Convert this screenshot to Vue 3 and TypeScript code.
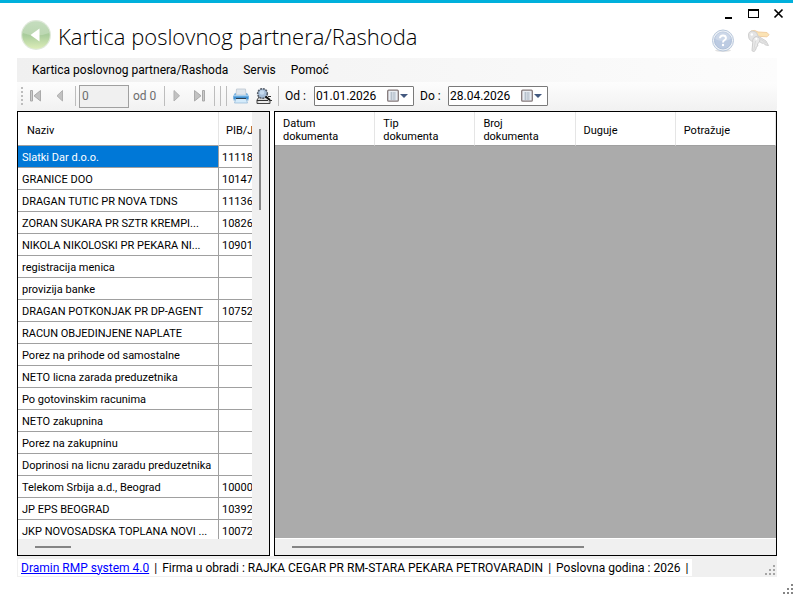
<script setup lang="ts">
import { ref } from 'vue'

interface Partner {
  naziv: string
  pib: string
}

const partners: Partner[] = [
  { naziv: 'Slatki Dar d.o.o.', pib: '11118' },
  { naziv: 'GRANICE DOO', pib: '10147' },
  { naziv: 'DRAGAN TUTIC PR NOVA TDNS', pib: '11136' },
  { naziv: 'ZORAN SUKARA PR SZTR KREMPI...', pib: '10826' },
  { naziv: 'NIKOLA NIKOLOSKI PR PEKARA NI...', pib: '10901' },
  { naziv: 'registracija menica', pib: '' },
  { naziv: 'provizija banke', pib: '' },
  { naziv: 'DRAGAN POTKONJAK PR DP-AGENT', pib: '10752' },
  { naziv: 'RACUN OBJEDINJENE NAPLATE', pib: '' },
  { naziv: 'Porez na prihode od samostalne', pib: '' },
  { naziv: 'NETO licna zarada preduzetnika', pib: '' },
  { naziv: 'Po gotovinskim racunima', pib: '' },
  { naziv: 'NETO zakupnina', pib: '' },
  { naziv: 'Porez na zakupninu', pib: '' },
  { naziv: 'Doprinosi na licnu zaradu preduzetnika', pib: '' },
  { naziv: 'Telekom Srbija a.d., Beograd', pib: '10000' },
  { naziv: 'JP EPS BEOGRAD', pib: '10392' },
  { naziv: 'JKP NOVOSADSKA TOPLANA NOVI ...', pib: '10072' },
]

const columns: string[] = ['Datum dokumenta', 'Tip dokumenta', 'Broj dokumenta', 'Duguje', 'Potražuje']

const selected = ref(0)
const page = ref('0')
const dateFrom = ref('01.01.2026')
const dateTo = ref('28.04.2026')
</script>

<template>
  <div class="window">
    <header class="head">
      <button class="plain back">
        <svg width="32" height="32" viewBox="0 0 32 32">
          <defs>
            <linearGradient id="backFill" x1="0" y1="0" x2="0" y2="1">
              <stop offset="0" stop-color="#b4d3ac" />
              <stop offset="0.5" stop-color="#a9cc9c" />
              <stop offset="1" stop-color="#dcedb8" />
            </linearGradient>
          </defs>
          <circle cx="16" cy="16" r="15" fill="#dfe9da" />
          <circle cx="16" cy="16" r="13.8" fill="url(#backFill)" />
          <path d="M3 14a13 12 0 0 1 26 0q-13 5-26 0z" fill="#fff" opacity=".22" />
          <path d="M19.5 9.5v13L10.500 16z" fill="#fff" />
        </svg>
      </button>
      <h1>Kartica poslovnog partnera/Rashoda</h1>
      <div class="corner">
        <div class="controls">
          <button class="plain"><svg width="13" height="12" viewBox="0 0 13 12"><path d="M3 9h7v2H3z" fill="#000" /></svg></button>
          <button class="plain"><svg width="13" height="12" viewBox="0 0 13 12"><path d="M1 1h11v9H1zM2 3v6h9V3z" fill="#000" fill-rule="evenodd" /></svg></button>
          <button class="plain"><svg width="13" height="12" viewBox="0 0 13 12"><path d="M2.500 1.500l8 8M10.500 1.500l-8 8" stroke="#000" stroke-width="1.700" /></svg></button>
        </div>
        <div class="tools">
          <button class="plain">
            <svg width="24" height="24" viewBox="0 0 24 24">
              <ellipse cx="12" cy="21.500" rx="8" ry="1.500" fill="#e2e2e2" />
              <circle cx="12" cy="11.500" r="10.500" fill="#eef2f7" stroke="#b9c8dc" />
              <circle cx="12" cy="11.500" r="8.500" fill="#bccbe2" stroke="#afc0d9" />
              <path d="M4 10a8 7.500 0 0 1 16 0q-8 4-16 0z" fill="#fff" opacity=".25" />
              <path d="M9 9.300q.2-2.800 3-2.800t3 2.600q0 1.500-1.800 2.300-1.200.6-1.200 2" fill="none" stroke="#fff" stroke-width="1.900" />
              <circle cx="12" cy="16" r="1.200" fill="#fff" />
            </svg>
          </button>
          <button class="plain">
            <svg width="24" height="24" viewBox="0 0 24 24">
              <path d="M4 2q4-1.500 7 1l9 .5 2 2.300-2 2-8.500-.5-6-.7z" fill="#fbe3b4" stroke="#f1cfa2" />
              <path d="M1.500 6q0-4 4.500-4 4.500.5 5 5l8 5 2.500 4.500-3.300-.6-1.500-1.800-1.600.2-5.600-3.700q-2 2.300-5 1.500Q1 10.500 1.500 6z" fill="#e4e4e4" stroke="#d0d0d0" />
              <path d="M6.500 9q2.500-3 5.500-.5 1.800 2 .3 4.500l-1.800 2 .3 2-1.600 1-.2 2-1.700 2.500-2.300-.7.700-8q-.5-2.500.8-4.800z" fill="#e9e9e9" stroke="#cdcdcd" />
              <path d="M8.500 12l-1.700 9M12 9l7 5" stroke="#d8d8d8" />
              <circle cx="4.800" cy="5.500" r="1.200" fill="#fff" />
              <circle cx="9.300" cy="9.800" r="1.100" fill="#fff" />
            </svg>
          </button>
        </div>
      </div>
    </header>

    <main class="content">
      <nav class="menu">
        <a href="#">Kartica poslovnog partnera/Rashoda</a>
        <a href="#">Servis</a>
        <a href="#">Pomoć</a>
      </nav>

      <div class="toolbar">
        <svg class="grip" width="4" height="20" viewBox="0 0 4 20"><path d="M1 1h2v2H1zM1 5h2v2H1zM1 9h2v2H1zM1 13h2v2H1zM1 17h2v2H1z" fill="#bdbdbd" /></svg>
        <button class="plain tool">
          <svg width="14" height="14" viewBox="0 0 14 14"><path d="M1.500 1.500h2v10.500h-2z" fill="#ccc" stroke="#a8a8a8" /><path d="M11.500 1.500v10.500L5 6.800z" fill="#c2c2c2" stroke="#aaa" /></svg>
        </button>
        <button class="plain tool">
          <svg width="14" height="14" viewBox="0 0 14 14"><path d="M9.500 1.500v10.500L4 6.800z" fill="#c2c2c2" stroke="#b0b0b0" /></svg>
        </button>
        <span class="sep"></span>
        <input v-model="page" class="page" type="text" aria-labelledby="pageCount" disabled />
        <label id="pageCount" class="count">od 0</label>
        <span class="sep"></span>
        <button class="plain tool narrow">
          <svg width="14" height="14" viewBox="0 0 14 14"><path d="M4 1.500v10.500l5.500-5.200z" fill="#c2c2c2" stroke="#b0b0b0" /></svg>
        </button>
        <button class="plain tool">
          <svg width="14" height="14" viewBox="0 0 14 14"><path d="M10.500 1.500h2v10.500h-2z" fill="#ccc" stroke="#a8a8a8" /><path d="M2.500 1.500v10.500L9 6.800z" fill="#c2c2c2" stroke="#aaa" /></svg>
        </button>
        <span class="sep"></span>
        <span class="sep"></span>
        <span class="sep"></span>
        <button class="plain tool">
          <svg width="16" height="16" viewBox="0 0 16 16">
            <path d="M3.500 1h9l.5 6H3z" fill="#dfe6ed" stroke="#bcc6d0" stroke-width=".8" />
            <path d="M1.500 5.500L3 5v2.500h10V5l1.500.5 1 2v5H.5v-5z" fill="#7db4e0" />
            <path d="M.5 8h15v3H.5z" fill="#3f90d2" />
            <path d="M1 7.200h14v1.200H1z" fill="#a8d2f2" />
            <path d="M3 10.500h10l1.500 4.500h-13z" fill="#d4ebfb" stroke="#8fb5d4" stroke-width=".7" />
            <path d="M3 10h10v1H3z" fill="#30404f" />
          </svg>
        </button>
        <button class="plain tool preview">
          <svg width="18" height="18" viewBox="0 0 18 18">
            <path d="M4 10h8l3 3v3.500H2V13z" fill="#d8d8d8" stroke="#444" />
            <path d="M2 13.500h11" stroke="#333" />
            <circle cx="7.500" cy="6.500" r="4.800" fill="#a5bdd8" stroke="#555d68" stroke-width="1.600" stroke-dasharray="2 .8" />
            <circle cx="7" cy="5.500" r="2.300" fill="#c5daef" />
            <path d="M10.500 9.500l4.500 3.500" stroke="#111" stroke-width="2" />
            <path d="M4 15h9" stroke="#fff" />
            <path d="M13 9.500h3M14.500 13.500H17" stroke="#333" />
          </svg>
        </button>
        <span class="sep"></span>
        <label class="datelabel" for="dateFrom">Od :</label>
        <div class="date">
          <input id="dateFrom" v-model="dateFrom" type="text" />
          <button class="plain">
            <svg width="22" height="14" viewBox="0 0 22 14"><rect x=".7" y="1.200" width="10.600" height="11" rx="1" fill="#e9edf3" stroke="#84797a" stroke-width="1.300" /><path d="M3 4h6M3 6h6M3 8h6M3 10h6M4.500 3v8M7 3v8" stroke="#a9b4c2" stroke-width=".7" /><path d="M13 5h8l-4 4z" fill="#43597f" /></svg>
          </button>
        </div>
        <label class="datelabel second" for="dateTo">Do :</label>
        <div class="date">
          <input id="dateTo" v-model="dateTo" type="text" />
          <button class="plain">
            <svg width="22" height="14" viewBox="0 0 22 14"><rect x=".7" y="1.200" width="10.600" height="11" rx="1" fill="#e9edf3" stroke="#84797a" stroke-width="1.300" /><path d="M3 4h6M3 6h6M3 8h6M3 10h6M4.500 3v8M7 3v8" stroke="#a9b4c2" stroke-width=".7" /><path d="M13 5h8l-4 4z" fill="#43597f" /></svg>
          </button>
        </div>
      </div>

      <div class="split">
        <section class="panel list">
          <div class="clip">
            <table class="partners">
              <thead>
                <tr><th class="name">Naziv</th><th class="pib">PIB/J</th></tr>
              </thead>
              <tbody>
                <tr v-for="(p, i) in partners" :key="p.naziv" @click="selected = i">
                  <td :class="{ selected: i === selected }">{{ p.naziv }}</td>
                  <td>{{ p.pib }}</td>
                </tr>
              </tbody>
            </table>
          </div>
          <div class="vbar"><span class="vthumb"></span></div>
          <div class="hbar"><span class="hthumb short"></span></div>
        </section>

        <section class="panel card">
          <div class="clip gray">
            <table class="entries">
              <thead>
                <tr><th v-for="c in columns" :key="c">{{ c }}</th></tr>
              </thead>
            </table>
          </div>
          <div class="hbar"><span class="hthumb long"></span></div>
        </section>
      </div>

      <footer class="status">
        <div class="info">
          <a href="#">Dramin RMP system 4.0</a>
          <span class="bar">|</span>
          <span>Firma u obradi : RAJKA CEGAR PR RM-STARA PEKARA PETROVARADIN</span>
          <span class="bar">|</span>
          <span>Poslovna godina : 2026</span>
          <span class="bar">|</span>
        </div>
        <svg class="size" width="11" height="11" viewBox="0 0 11 11"><path d="M8 0h2v2H8zM4 4h2v2H4zM8 4h2v2H8zM0 8h2v2H0zM4 8h2v2H4zM8 8h2v2H8z" fill="#a5a5a5" /></svg>
      </footer>
    </main>
    <svg class="corner-grip" width="10" height="10" viewBox="0 0 10 10"><path d="M8 0h2v2H8zM4 4h2v2H4zM8 4h2v2H8zM0 8h2v2H0zM4 8h2v2H4zM8 8h2v2H8z" fill="#858585" /></svg>
  </div>
</template>

<style>
body {
  margin: 0;
  background: #fff;
}
</style>

<style scoped>
* {
  box-sizing: border-box;
}
.window {
  position: relative;
  display: flex;
  flex-direction: column;
  height: 100vh;
  padding-bottom: 18px;
  border-top: 3px solid #00b0dc;
  background: #fff;
  color: #000;
  font: 12px/16px Roboto, 'Open Sans', sans-serif;
}
svg {
  display: block;
}
.plain {
  display: flex;
  align-items: center;
  justify-content: center;
  padding: 0;
  border: 0;
  background: none;
}
.head {
  display: flex;
  flex: none;
  align-items: flex-start;
  height: 55px;
  padding: 0 8px 0 20px;
}
.back {
  margin-top: 16px;
}
h1 {
  flex: 1;
  margin: 17px 0 0 6px;
  font-family: 'Open Sans', 'Noto Sans', sans-serif;
  font-size: 22px;
  font-weight: 300;
  line-height: 32px;
  white-space: nowrap;
}
.controls {
  display: flex;
  gap: 12px;
  justify-content: flex-end;
  padding-top: 5px;
}
.tools {
  display: flex;
  gap: 12px;
  justify-content: flex-end;
  padding: 9px 14px 0 0;
}
.content {
  display: flex;
  flex: 1;
  flex-direction: column;
  min-height: 0;
  margin: 0 16px 0 17px;
}
.menu {
  display: flex;
  flex: none;
  gap: 15px;
  height: 24px;
  padding-left: 15px;
  background: linear-gradient(90deg, #f0f0f0, #fcfcfc);
  line-height: 24px;
}
.menu a {
  color: #000;
  text-decoration: none;
}
.toolbar {
  display: flex;
  flex: none;
  align-items: center;
  height: 29px;
  padding: 0 0 1px 3px;
  border-radius: 0 0 3px 0;
  background: linear-gradient(#fdfdfd, #f1f1f1);
}
.tool {
  width: 24px;
  height: 24px;
}
.narrow {
  width: 20px;
}
.preview {
  width: 22px;
}
.sep {
  width: 1px;
  height: 20px;
  margin: 0 2px 0 3px;
  background: #bdbdbd;
}
.page {
  width: 50px;
  height: 23px;
  margin-left: 1px;
  padding: 0 2px;
  border: 1px solid #a0a0a0;
  background: #f0f0f0;
  color: #6d6d6d;
  font: inherit;
}
.count {
  width: 32px;
  padding-left: 4px;
  color: #6d6d6d;
  white-space: nowrap;
}
.datelabel {
  width: 33px;
  padding-left: 4px;
  white-space: nowrap;
}
.second {
  width: 34px;
  padding-left: 6px;
}
.date {
  display: flex;
  width: 100px;
  height: 20px;
  padding-right: 4px;
  border: 1px solid #7a7a7a;
  border-radius: 1px;
  background: #fff;
}
.date input {
  flex: 1;
  min-width: 0;
  padding: 0 0 0 1px;
  border: 0;
  background: none;
  font: inherit;
}
.split {
  display: grid;
  flex: 1;
  grid-template-columns: 253px minmax(0, 1fr);
  gap: 4px;
  min-height: 0;
}
.panel {
  display: grid;
  grid-template-rows: minmax(0, 1fr) 16px;
  min-height: 0;
  border: 1px solid #000;
  background: #f0f0f0;
}
.list {
  grid-template-columns: minmax(0, 1fr) 17px;
}
.card {
  grid-template-columns: minmax(0, 1fr);
}
.clip {
  overflow: hidden;
  background: #fff;
}
.gray {
  border-bottom: 1px solid #fff;
  background: #ababab;
}
table {
  width: 100%;
  border-collapse: separate;
  border-spacing: 0;
  table-layout: fixed;
  font: 11px/13px Roboto, 'Liberation Sans', sans-serif;
}
th {
  height: 34px;
  border-right: 1px solid #e5e5e5;
  border-bottom: 1px solid #a0a0a0;
  background: #fff;
  font-weight: 400;
  text-align: left;
}
.partners th {
  padding: 3px 0 0 9px;
}
.partners .name {
  width: 201px;
}
.partners .pib {
  padding-left: 7px;
  border-right: 0;
}
td {
  height: 22px;
  padding: 1px 0 0 4px;
  border-right: 1px solid #a0a0a0;
  border-bottom: 1px solid #a0a0a0;
  overflow: hidden;
  white-space: nowrap;
}
td + td {
  padding-left: 3px;
  border-right: 0;
}
.selected {
  background: #0078d7;
  color: #fff;
}
.entries th {
  padding: 3px 24px 0 8px;
}
.entries th:nth-child(n + 4) {
  padding-right: 0;
}
.vbar {
  padding: 17px 0 0 7px;
}
.vthumb {
  display: block;
  width: 2px;
  height: 81px;
  background: #858585;
}
.hbar {
  grid-column: 1 / -1;
  padding-top: 7px;
}
.hthumb {
  display: block;
  height: 2px;
  margin-left: 17px;
  background: #858585;
}
.short {
  width: 36px;
}
.long {
  width: 292px;
}
.status {
  display: flex;
  flex: none;
  align-items: center;
  justify-content: space-between;
  height: 21px;
  padding: 1px 1px 0 1px;
  background: #f0f0f0;
}
.info {
  display: flex;
  height: 17px;
  padding: 0 4px 0 3px;
  background: #fff;
  line-height: 19px;
  white-space: nowrap;
}
.info a {
  color: #0000ff;
}
.bar {
  padding: 0 5px;
}
.info .bar:last-child {
  padding-right: 0;
}
.size {
  align-self: flex-end;
  margin-bottom: 1px;
}
.corner-grip {
  position: absolute;
  right: 0;
  bottom: 1px;
}
</style>
